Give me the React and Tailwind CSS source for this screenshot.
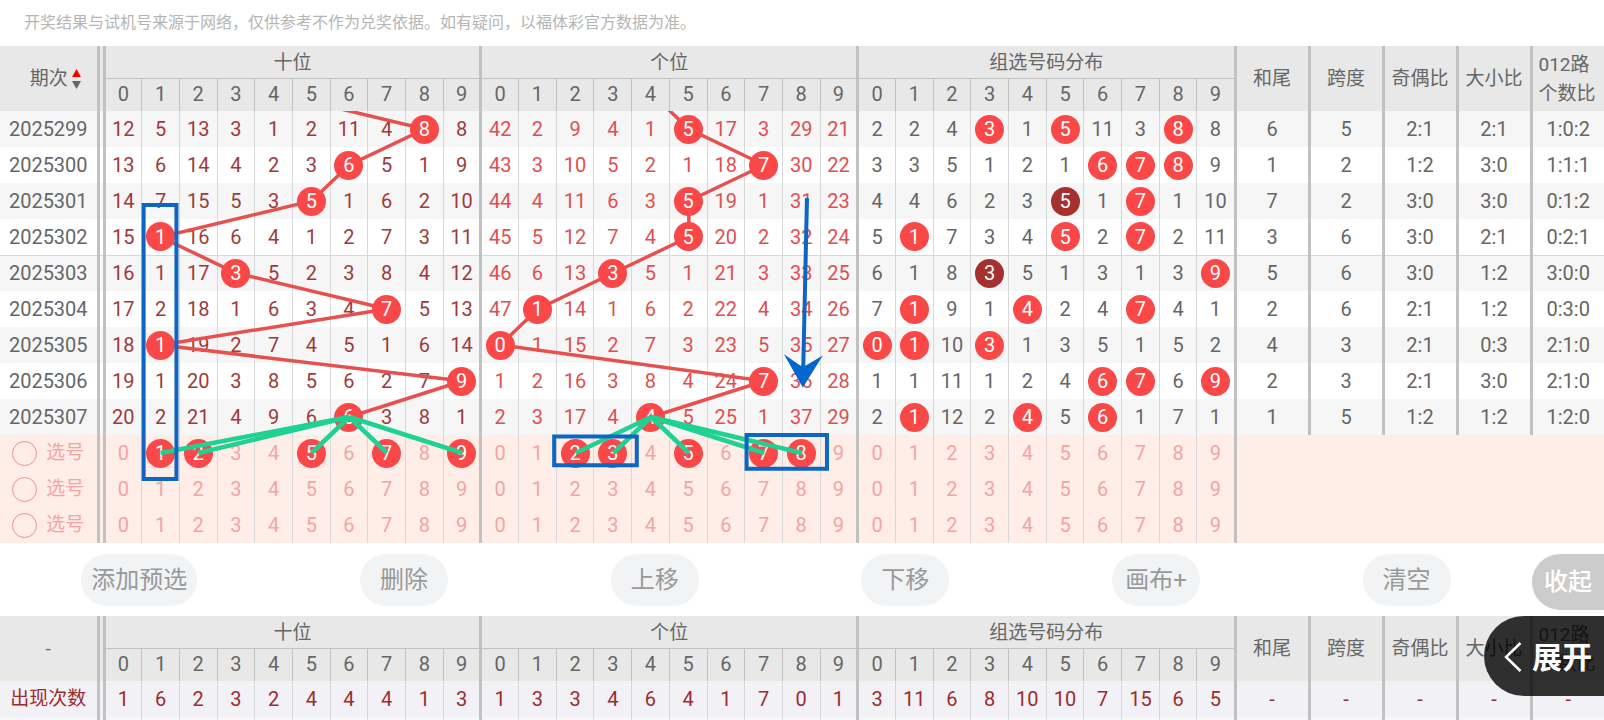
import { useState } from 'react'
import clsx from 'clsx'

const DIGITS = [0, 1, 2, 3, 4, 5, 6, 7, 8, 9]
const STATS = ['和尾', '跨度', '奇偶比', '大小比']
const ACTIONS = ['添加预选', '删除', '上移', '下移', '画布+', '清空']

// cada fila: decenas | unidades | distribución. "*" = número salido, "!" = salido repetido
const ROWS = [
  { id: '2025299', tens: '12 5 13 3 1 2 11 4 8* 8', units: '42 2 9 4 1 5* 17 3 29 21', dist: '2 2 4 3* 1 5* 11 3 8* 8', stats: '6 5 2:1 2:1 1:0:2' },
  { id: '2025300', tens: '13 6 14 4 2 3 6* 5 1 9', units: '43 3 10 5 2 1 18 7* 30 22', dist: '3 3 5 1 2 1 6* 7* 8* 9', stats: '1 2 1:2 3:0 1:1:1' },
  { id: '2025301', tens: '14 7 15 5 3 5* 1 6 2 10', units: '44 4 11 6 3 5* 19 1 31 23', dist: '4 4 6 2 3 5! 1 7* 1 10', stats: '7 2 3:0 3:0 0:1:2' },
  { id: '2025302', tens: '15 1* 16 6 4 1 2 7 3 11', units: '45 5 12 7 4 5* 20 2 32 24', dist: '5 1* 7 3 4 5* 2 7* 2 11', stats: '3 6 3:0 2:1 0:2:1' },
  { id: '2025303', tens: '16 1 17 3* 5 2 3 8 4 12', units: '46 6 13 3* 5 1 21 3 33 25', dist: '6 1 8 3! 5 1 3 1 3 9*', stats: '5 6 3:0 1:2 3:0:0' },
  { id: '2025304', tens: '17 2 18 1 6 3 4 7* 5 13', units: '47 1* 14 1 6 2 22 4 34 26', dist: '7 1* 9 1 4* 2 4 7* 4 1', stats: '2 6 2:1 1:2 0:3:0' },
  { id: '2025305', tens: '18 1* 19 2 7 4 5 1 6 14', units: '0* 1 15 2 7 3 23 5 35 27', dist: '0* 1* 10 3* 1 3 5 1 5 2', stats: '4 3 2:1 0:3 2:1:0' },
  { id: '2025306', tens: '19 1 20 3 8 5 6 2 7 9*', units: '1 2 16 3 8 4 24 7* 36 28', dist: '1 1 11 1 2 4 6* 7* 6 9*', stats: '2 3 2:1 3:0 2:1:0' },
  { id: '2025307', tens: '20 2 21 4 9 6 6* 3 8 1', units: '2 3 17 4 4* 5 25 1 37 29', dist: '2 1* 12 2 4* 5 6* 1 7 1', stats: '1 5 1:2 1:2 1:2:0' },
]

const PICKS = [
  { id: 'p1', tens: [1, 2, 5, 7, 9], units: [2, 3, 5, 7, 8] },
  { id: 'p2', tens: [], units: [] },
  { id: 'p3', tens: [], units: [] },
]

const COUNTS = '1 6 2 3 2 4 4 4 1 3 1 3 3 4 6 4 1 7 0 1 3 11 6 8 10 10 7 15 6 5'.split(' ')

// en el periodo anterior (fuera de la vista) salió 4 en ambas posiciones
function trendPoints(key, offset) {
  const cols = ROWS.map((r) => r[key].split(' ').findIndex((v) => v.endsWith('*')))
  return [4, ...cols].map((c, i) => `${offset + c + 0.5},${i - 0.5}`).join(' ')
}

function Ball({ children, dark }) {
  return (
    <span
      className={clsx(
        'relative z-20 mx-auto flex size-[29px] items-center justify-center rounded-full text-white',
        dark ? 'bg-[#a43030]' : 'bg-[#fa4848]',
      )}
    >
      {children}
    </span>
  )
}

function GroupCells({ values, className }) {
  return values.map((v, i) => (
    <td
      key={i}
      className={clsx('p-0', i === 9 ? 'border-r-3 border-r-[#c1c1c1]' : 'border-r border-r-[#d8d8d8]', className)}
    >
      {/[*!]$/.test(v) ? <Ball dark={v.endsWith('!')}>{v.slice(0, -1)}</Ball> : v}
    </td>
  ))
}

function Gap({ rowSpan }) {
  return <td rowSpan={rowSpan} className="border-r-3 border-r-[#c1c1c1] p-0" />
}

function Cols() {
  return (
    <colgroup>
      <col className="w-[98px]" />
      <col className="w-[6px]" />
      {Array.from({ length: 30 }, (_, i) => <col key={i} />)}
      {STATS.map((s) => <col key={s} className="w-[74px]" />)}
      <col className="w-[73px]" />
    </colgroup>
  )
}

function Head({ children }) {
  return (
    <thead className="bg-[#e8e8e8] text-[19px] leading-5">
      <tr className="h-8">
        <th rowSpan={2} scope="col" className="border-r-3 border-r-[#c1c1c1] p-0 font-normal">{children}</th>
        <Gap rowSpan={2} />
        {['十位', '个位', '组选号码分布'].map((g) => (
          <th key={g} colSpan={10} scope="colgroup" className="border-r-3 border-b border-[#c1c1c1] p-0 pt-0.5 font-normal">{g}</th>
        ))}
        {STATS.map((s) => (
          <th key={s} rowSpan={2} scope="col" className="border-r-3 border-r-[#c1c1c1] p-0 font-normal">{s}</th>
        ))}
        <th rowSpan={2} scope="col" className="p-0 pl-1.5 text-left leading-[29px] font-normal">
          012路<br />个数比
        </th>
      </tr>
      <tr className="h-[33px] text-xl leading-5">
        {['t', 'u', 'd'].map((g) =>
          DIGITS.map((d) => (
            <th
              key={g + d}
              scope="col"
              className={clsx('border-r-[#c1c1c1] p-0 pb-0.5 font-normal', d === 9 ? 'border-r-3' : 'border-r')}
            >
              {d}
            </th>
          )),
        )}
      </tr>
    </thead>
  )
}

// un paso en x = una columna de dígitos, un paso en y = una fila
function Layer({ className, children }) {
  return (
    <svg
      viewBox="0 0 30 12"
      preserveAspectRatio="none"
      aria-hidden="true"
      className={clsx('pointer-events-none absolute top-[65px] left-[104px] h-[432px] w-[calc(100%-472px)]', className)}
    >
      {children}
    </svg>
  )
}

function TrendLines() {
  return (
    <Layer className="z-10">
      {[trendPoints('tens', 0), trendPoints('units', 10)].map((pts) => (
        <polyline key={pts} points={pts} fill="none" stroke="#e85050" strokeWidth="3.5" vectorEffect="non-scaling-stroke" />
      ))}
    </Layer>
  )
}

function Drawings() {
  const fans = [
    ...PICKS[0].tens.map((c) => [6.5, c + 0.5]),
    ...PICKS[0].units.map((c) => [14.5, c + 10.5]),
  ]
  return (
    <Layer className="z-30">
      <g stroke="#1fd192" strokeWidth="4.5">
        {fans.map(([a, b]) => (
          <line key={b} x1={a} y1="8.5" x2={b} y2="9.5" vectorEffect="non-scaling-stroke" />
        ))}
      </g>
      <g fill="none" stroke="#0e66c4" strokeWidth="4">
        <rect x="1.05" y="2.61" width="0.87" height="7.61" vectorEffect="non-scaling-stroke" />
        <rect x="11.93" y="9.04" width="2.19" height="0.8" vectorEffect="non-scaling-stroke" />
        <rect x="17.03" y="9" width="2.13" height="0.94" vectorEffect="non-scaling-stroke" />
        <line x1="18.63" y1="2.42" x2="18.53" y2="7.2" vectorEffect="non-scaling-stroke" />
      </g>
      <path d="M18.02 6.76L18.45 7.07L18.6 7.07L19.05 6.79L18.52 7.68Z" fill="#0066d0" />
    </Layer>
  )
}

export default function App() {
  const [pick, setPick] = useState(null)

  return (
    <div className="min-h-screen overflow-hidden bg-white font-[Roboto,'Noto_Sans_CJK_SC',sans-serif] text-[#666]">
      <p className="flex h-[46px] items-center pl-6 text-base text-[#b5b5b5]">
        开奖结果与试机号来源于网络，仅供参考不作为兑奖依据。如有疑问，以福体彩官方数据为准。
      </p>

      <div className="relative">
        <table className="w-full table-fixed border-collapse text-center text-xl leading-5">
          <Cols />
          <Head>
            <button type="button" className="flex w-full items-center justify-center gap-1 pl-3.5">
              期次
              <svg viewBox="0 0 9 20" className="h-5 w-[9px]" aria-hidden="true">
                <path d="M4.500 0L9 8H0Z" fill="#f00" />
                <path d="M4.500 20L9 12H0Z" fill="#666" />
              </svg>
            </button>
          </Head>
          <tbody>
            {ROWS.map((r, i) => (
              <tr
                key={r.id}
                className={clsx('h-9', i % 2 === 0 ? 'bg-[#f6f6f6]' : 'bg-white', i === 4 && 'border-t border-t-[#d8d8d8]')}
              >
                <th scope="row" className="border-r-3 border-r-[#c1c1c1] p-0 font-normal">{r.id}</th>
                <Gap />
                <GroupCells values={r.tens.split(' ')} className="text-[#a03a3a]" />
                <GroupCells values={r.units.split(' ')} className="text-[#e04f4f]" />
                <GroupCells values={r.dist.split(' ')} />
                {r.stats.split(' ').map((s, k) => (
                  <td key={k} className={clsx('p-0', k < 4 && 'border-r-3 border-r-[#c1c1c1]')}>{s}</td>
                ))}
              </tr>
            ))}
            {PICKS.map((p) => (
              <tr key={p.id} className="h-9 bg-[#ffeee7] text-[#f5a3a3]">
                <th scope="row" className="border-r-3 border-r-[#c1c1c1] p-0 font-normal">
                  <label className="flex items-center justify-center gap-[9px] text-[19px]">
                    <input
                      type="radio"
                      name="pick"
                      checked={pick === p.id}
                      onChange={() => setPick(p.id)}
                      className="size-[25px] appearance-none rounded-full border border-[#f58f8f] checked:bg-[#fa4848]"
                    />
                    选号
                  </label>
                </th>
                <Gap />
                <GroupCells values={DIGITS.map((d) => (p.tens.includes(d) ? `${d}*` : `${d}`))} />
                <GroupCells values={DIGITS.map((d) => (p.units.includes(d) ? `${d}*` : `${d}`))} />
                <GroupCells values={DIGITS.map(String)} />
                <td colSpan={5} className="p-0" />
              </tr>
            ))}
          </tbody>
        </table>
        <TrendLines />
        <Drawings />
      </div>

      <div className="flex h-[73px] items-start pt-[11px] text-2xl leading-6">
        <div className="flex flex-1 justify-around">
          {ACTIONS.map((a) => (
            <button key={a} type="button" className="h-[52px] min-w-[88px] rounded-full bg-[#f2f3f5] px-2.5 text-[#999]">
              {a}
            </button>
          ))}
        </div>
        <button type="button" className="h-14 w-[72px] rounded-l-full bg-[#ccc] font-medium text-white">
          收起
        </button>
      </div>

      <div className="relative">
        <table className="w-full table-fixed border-collapse text-center text-xl leading-5">
          <Cols />
          <Head>-</Head>
          <tbody className="text-[#9c2c2c]">
            <tr className="h-9 bg-[#f2f1f6]">
              <th scope="row" className="border-r-3 border-r-[#c1c1c1] p-0 text-[19px] font-normal">出现次数</th>
              <Gap />
              <GroupCells values={COUNTS.slice(0, 10)} />
              <GroupCells values={COUNTS.slice(10, 20)} />
              <GroupCells values={COUNTS.slice(20)} />
              {DIGITS.slice(0, 5).map((k) => (
                <td key={k} className={clsx('p-0', k < 4 && 'border-r-3 border-r-[#c1c1c1]')}>-</td>
              ))}
            </tr>
            <tr className="h-[3px] bg-[#f7f7f7]">
              <th className="border-r-3 border-r-[#c1c1c1] p-0" />
              <Gap />
              <GroupCells values={DIGITS.map(() => '')} />
              <GroupCells values={DIGITS.map(() => '')} />
              <GroupCells values={DIGITS.map(() => '')} />
              {DIGITS.slice(0, 5).map((k) => (
                <td key={k} className={clsx('p-0', k < 4 && 'border-r-3 border-r-[#c1c1c1]')} />
              ))}
            </tr>
          </tbody>
        </table>
        <button
          type="button"
          className="absolute top-0 right-0 flex h-20 w-[120px] items-center justify-end gap-2.5 rounded-l-full bg-black/80 pt-0.5 pr-3 text-[30px] font-bold text-white"
        >
          <svg viewBox="0 0 18 30" className="h-[30px] w-[18px]" fill="none" stroke="#fff" strokeWidth="2.500" aria-hidden="true">
            <path d="M16.500 1L2 15L16.500 29" />
          </svg>
          展开
        </button>
      </div>
    </div>
  )
}
